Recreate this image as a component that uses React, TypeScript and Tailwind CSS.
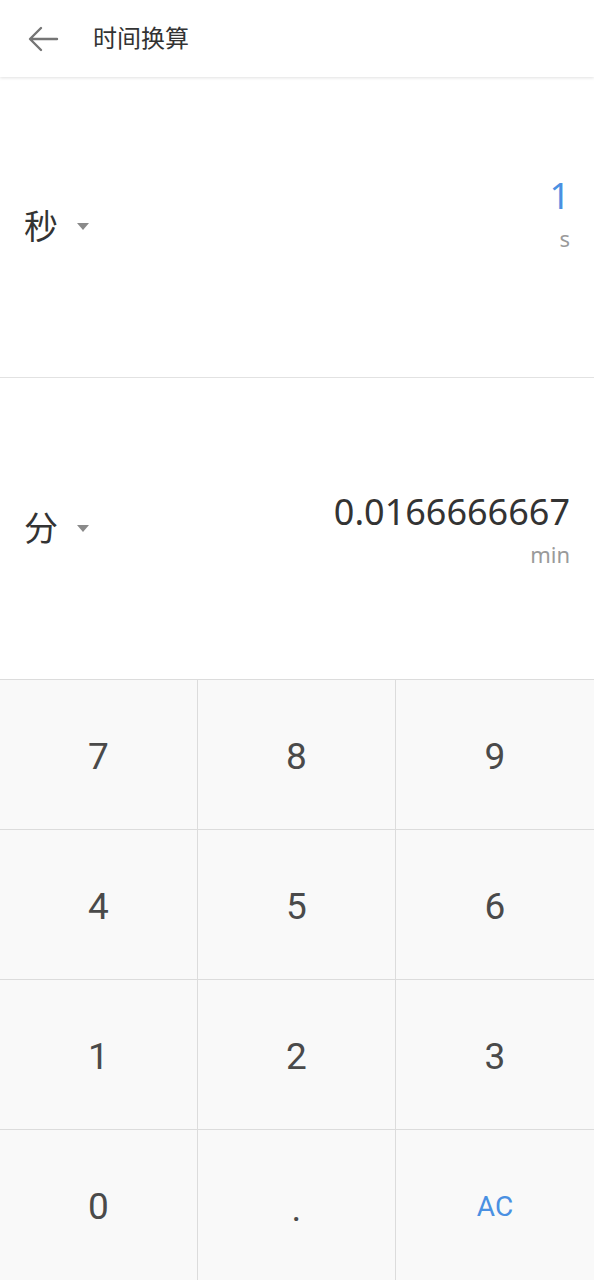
import React from "react";

const font = { fontFamily: 'Roboto, "Noto Sans CJK SC", sans-serif' };
const noto = { fontFamily: '"Noto Sans", "Open Sans", sans-serif' };

function Caret() {
  return (
    <svg width="14" height="8" viewBox="0 0 14 8" className="ml-[18px]">
      <path d="M1 0 L13 0 L7 7 Z" fill="#8a8a8a" />
    </svg>
  );
}

function Value({ value, unit, color }: { value: string; unit: string; color: string }) {
  return (
    <div className="flex flex-col items-end" style={noto}>
      <span className={"text-[36px] leading-[50px] " + color}>{value}</span>
      <span className="text-[22px] text-[#9a9a9a] leading-[30px] mt-[2px]">{unit}</span>
    </div>
  );
}

export default function App() {
  const keys = ["7", "8", "9", "4", "5", "6", "1", "2", "3", "0", ".", "AC"];
  return (
    <div className="w-[594px] h-[1280px] bg-white flex flex-col overflow-hidden" style={font}>
      <header className="h-[77px] flex items-center shadow-[0_1px_3px_rgba(0,0,0,0.12)] relative z-10 bg-white">
        <svg width="32" height="32" viewBox="0 0 32 32" className="ml-[27px]">
          <path d="M30 16 H4 M14 5 L3 16 L14 27" stroke="#757575" strokeWidth="2.4" fill="none" strokeLinecap="round" strokeLinejoin="round" />
        </svg>
        <span className="ml-[34px] text-[24px] text-[#333]">时间换算</span>
      </header>

      <section className="h-[301px] flex items-center justify-between px-6 border-b border-[#e2e2e2]">
        <div className="flex items-center">
          <span className="text-[34px] text-[#333] leading-none">秒</span>
          <Caret />
        </div>
        <div className="mb-[30px]">
          <Value value="1" unit="s" color="text-[#4a90e2]" />
        </div>
      </section>

      <section className="h-[301px] flex items-center justify-between px-6">
        <div className="flex items-center">
          <span className="text-[34px] text-[#333] leading-none">分</span>
          <Caret />
        </div>
        <div className="mb-[2px]">
          <Value value="0.0166666667" unit="min" color="text-[#333]" />
        </div>
      </section>

      <div className="flex-1 grid grid-cols-3 grid-rows-4 bg-[#f9f9f9] border-t border-[#dcdcdc]">
        {keys.map((k, i) => (
          <div
            key={k}
            className={
              "flex items-center justify-center border-[#dcdcdc] " +
              (i % 3 !== 2 ? "border-r " : "") +
              (i < 9 ? "border-b " : "")
            }
          >
            {k === "AC" ? (
              <span className="text-[28px] text-[#4a90e2] mt-[4px]">AC</span>
            ) : (
              <span className={"text-[37px] text-[#4a4a4a] " + (k === "." ? "mt-[8px]" : "mt-[4px]")}>{k}</span>
            )}
          </div>
        ))}
      </div>
    </div>
  );
}
